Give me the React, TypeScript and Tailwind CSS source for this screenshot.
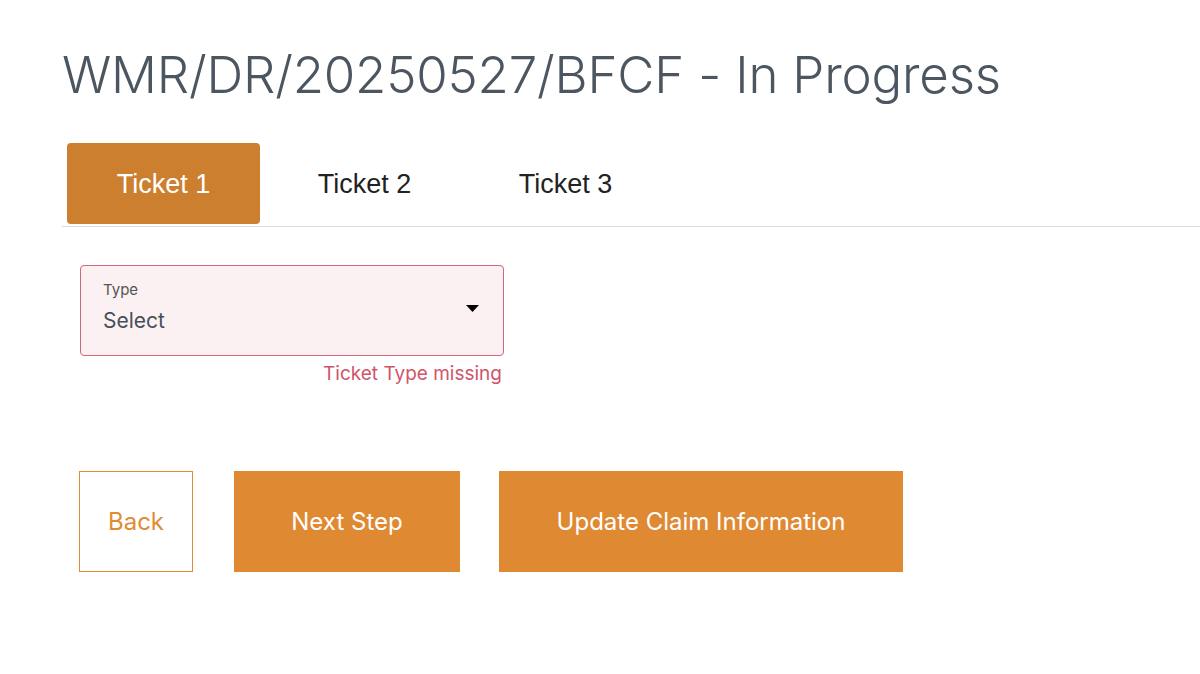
import React from "react";

export default function App() {
  return (
    <div className="w-[1200px] h-[674px] bg-white overflow-hidden" style={{ fontFamily: "Inter, 'Noto Sans', sans-serif" }}>
      <div className="pl-[62px] pt-[41px]">
        <h1 className="text-[51px] leading-[68px] font-light text-[#4b5661] tracking-[-0.2px]">
          WMR/DR/20250527/BFCF - In Progress
        </h1>
        <div className="mt-[34px] flex gap-[8px] pl-[5px] border-b border-[#dcdcdc]" style={{ fontFamily: "'Liberation Sans', Arial, sans-serif" }}>
          <div className="w-[193px] h-[81px] rounded-[4px] bg-[#cd7f30] text-white text-[27px] flex items-center justify-center mb-[2px] pt-[2px]">
            Ticket 1
          </div>
          <div className="w-[193px] h-[81px] text-[#222] text-[27px] flex items-center justify-center pt-[2px]">
            Ticket 2
          </div>
          <div className="w-[193px] h-[81px] text-[#222] text-[27px] flex items-center justify-center pt-[2px]">
            Ticket 3
          </div>
        </div>
        <div className="pl-[18px] pt-[38px]">
          <div className="w-[424px]">
            <div className="h-[91px] rounded-[4px] border border-[#d4677a] bg-[#fbf1f3] pl-[22px] pr-[24px] flex items-center justify-between">
              <div className="flex flex-col pb-[5px]">
                <span className="text-[15px] leading-[18px] text-[#555]">Type</span>
                <span className="text-[21px] leading-[28px] text-[#474f58] mt-[8px]">Select</span>
              </div>
              <svg width="13" height="7" viewBox="0 0 13 7" className="mb-[4px]">
                <path d="M0 0 L13 0 L6.5 7 Z" fill="#000" />
              </svg>
            </div>
            <div className="text-right text-[19px] leading-[24px] text-[#d05469] mt-[6px] pr-[2px]">Ticket Type missing</div>
          </div>
          <div className="mt-[85px] flex -ml-[1px]">
            <button className="w-[114px] h-[101px] border border-[#e08b35] text-[#e08b35] text-[24px] flex items-center justify-center">
              Back
            </button>
            <button className="ml-[41px] w-[226px] h-[101px] bg-[#df8a33] text-white text-[24px] flex items-center justify-center">
              Next Step
            </button>
            <button className="ml-[39px] w-[404px] h-[101px] bg-[#df8a33] text-white text-[24px] flex items-center justify-center">
              Update Claim Information
            </button>
          </div>
        </div>
      </div>
    </div>
  );
}
